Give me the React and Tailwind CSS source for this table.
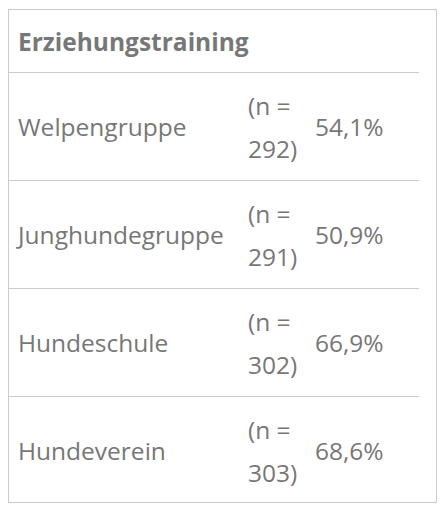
export default function App() {
  const rows = [
    ["Welpengruppe", "292)", "54,1%"],
    ["Junghundegruppe", "291)", "50,9%"],
    ["Hundeschule", "302)", "66,9%"],
    ["Hundeverein", "303)", "68,6%"],
  ];
  return (
    <div className="bg-white w-[444px] h-[509px] pt-[9px] pl-[8px]" style={{ fontFamily: '"Open Sans", sans-serif' }}>
      <div className="w-[429px] h-[494px] border border-[#cccccc] text-[#777777] text-[24.5px] leading-[43px]">
        <div className="w-[410px] h-[63px] border-b border-[#cccccc] flex items-center pl-[9px] font-bold">
          Erziehungstraining
        </div>
        {rows.map((r, i) => (
          <div
            key={r[0]}
            className={`w-[410px] grid grid-cols-[229px_67px_113px] items-center ${i < 3 ? "h-[108px] border-b border-[#cccccc]" : "h-[107px]"}`}
          >
            <div className="pl-[9px] whitespace-nowrap">{r[0]}</div>
            <div className="pl-[10px] flex flex-col">
              <span>(n =</span>
              <span>{r[1]}</span>
            </div>
            <div className="pl-[10px]">{r[2]}</div>
          </div>
        ))}
      </div>
    </div>
  );
}
